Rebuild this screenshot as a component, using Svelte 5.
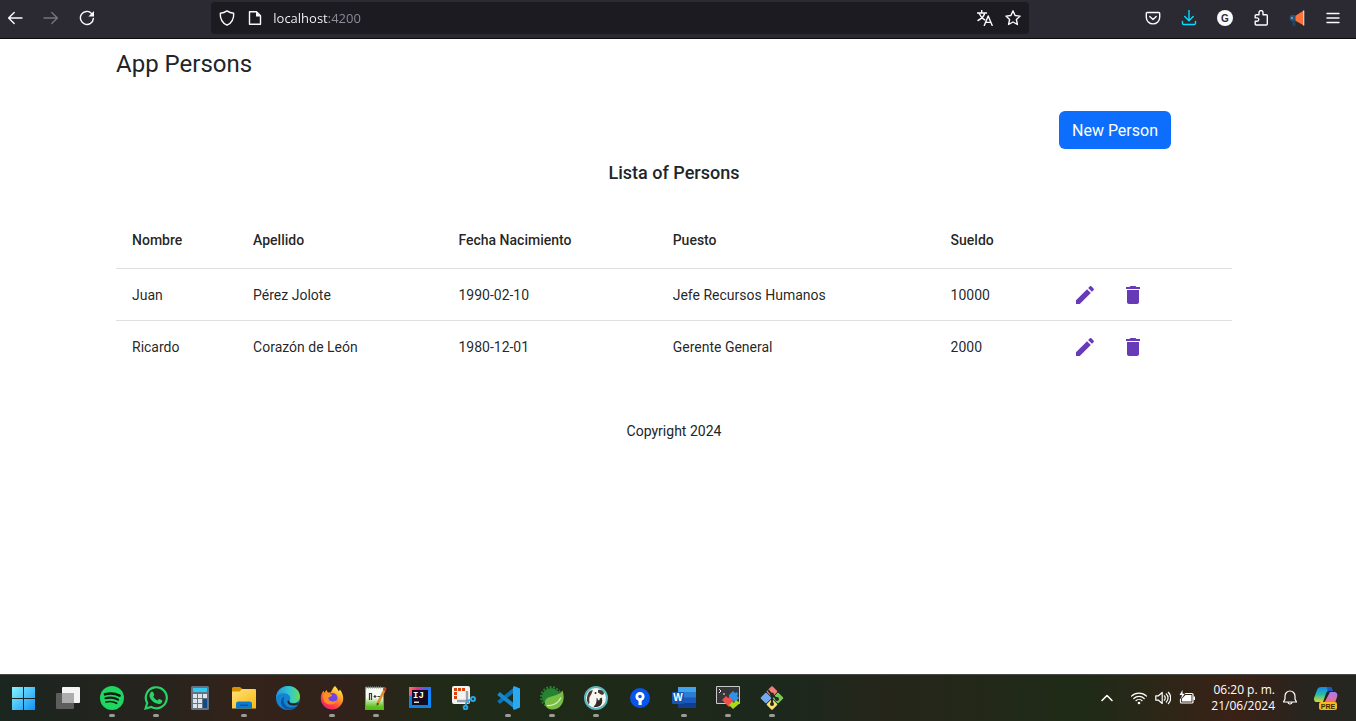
<script>
  let address = $state('localhost:4200');

  const persons = [
    { name: 'Juan', surname: 'Pérez Jolote', born: '1990-02-10', job: 'Jefe Recursos Humanos', salary: 10000 },
    { name: 'Ricardo', surname: 'Corazón de León', born: '1980-12-01', job: 'Gerente General', salary: 2000 }
  ];

  const apps = [
    { id: 'start', label: 'Start' },
    { id: 'tasks', label: 'Task view' },
    { id: 'spotify', label: 'Spotify', open: true },
    { id: 'whatsapp', label: 'WhatsApp', open: true },
    { id: 'calc', label: 'Calculator' },
    { id: 'files', label: 'File Explorer', open: true },
    { id: 'edge', label: 'Edge' },
    { id: 'firefox', label: 'Firefox', open: true },
    { id: 'notepad', label: 'Notepad++', open: true },
    { id: 'idea', label: 'IntelliJ IDEA' },
    { id: 'snip', label: 'Snipping Tool' },
    { id: 'code', label: 'Visual Studio Code', open: true },
    { id: 'spring', label: 'Spring Tools', open: true },
    { id: 'dbeaver', label: 'DBeaver', open: true },
    { id: 'sourcetree', label: 'Sourcetree' },
    { id: 'word', label: 'Word', open: true },
    { id: 'console', label: 'Console', open: true },
    { id: 'git', label: 'Git', open: true }
  ];
</script>

<div class="screen">
  <nav class="toolbar" aria-label="Browser">
    <div class="group">
      <button class="tool" aria-label="Back">
        <svg viewBox="0 0 16 16"><path d="M15 8H1.8M7.2 2.4 1.6 8l5.6 5.6" /></svg>
      </button>
      <button class="tool dim" aria-label="Forward">
        <svg viewBox="0 0 16 16"><path d="M1 8h13.2M8.8 2.4 14.4 8l-5.6 5.6" /></svg>
      </button>
      <button class="tool" aria-label="Reload">
        <svg viewBox="0 0 16 16"><path d="M14.4 8.4A6.5 6.5 0 1 1 12.6 3.4" /><path class="solid" d="M15 1v5.6H9.4z" /></svg>
      </button>
    </div>
    <div class="spacer"></div>
    <div class="urlbar">
      <svg viewBox="0 0 16 16"><path d="M8 .9c2 1.4 4.300 2.100 6.700 2.300.3 5.700-2 9.800-6.700 12C3.300 13 1 8.900 1.300 3.200 3.700 3 6 2.300 8 .9z" /></svg>
      <svg viewBox="0 0 16 16"><path d="M3.500 1.700h6l4 4v8.600H2.500V1.700z" /><path class="solid" d="M9 1.500 13.800 6.500H9z" /></svg>
      <input class="address" aria-label="Address" bind:value={address} />
      <button class="mini" aria-label="Translate">
        <svg viewBox="0 0 16 16"><path d="M0 3h9.500M4.700.5V3M7.700 3C7 6 4 9 1 10.500M2.200 3.500C3.500 6.500 5.500 8.500 7.700 9.800M7.300 15.500l3.900-9.500 4 9.500M8.700 12.400h5.200" /></svg>
      </button>
      <button class="mini" aria-label="Bookmark">
        <svg viewBox="0 0 16 16"><path d="m8 .9 2.100 4.600 5 .6-3.700 3.400 1 5L8 12l-4.400 2.500 1-5L.9 6.100l5-.6z" /></svg>
      </button>
    </div>
    <div class="spacer"></div>
    <div class="group">
      <button class="tool" aria-label="Pocket">
        <svg viewBox="0 0 16 16"><path d="M2.200 2.500h11.600c.5 0 .9.400.9.900V7.200a6.700 6.700 0 0 1-13.400 0V3.400c0-.5.400-.9.900-.9z" /><path d="m4.800 6.500 3.200 3 3.200-3" /></svg>
      </button>
      <button class="tool cyan" aria-label="Downloads">
        <svg viewBox="0 0 16 16"><path d="M8 0v10.500M3.800 6.500 8 10.700l4.200-4.200M1.500 11.500v1.700c0 .9.600 1.300 1.300 1.300h10.400c.7 0 1.300-.4 1.300-1.300v-1.700" /></svg>
      </button>
      <button class="tool" aria-label="Account">
        <svg viewBox="0 0 16 16"><circle class="solid" cx="8" cy="8" r="8" /><text x="8" y="11.500" class="gee">G</text></svg>
      </button>
      <button class="tool" aria-label="Extensions">
        <svg viewBox="0 0 16 16"><path d="M6 4.700V2.600a2 2 0 0 1 4 0v2.100h3.300c.6 0 1 .4 1 1V14c0 .6-.4 1-1 1H3.200c-.6 0-1-.4-1-1v-2.700h1.900a1.700 1.700 0 0 0 0-3.400H2.200V5.700c0-.6.400-1 1-1z" /></svg>
      </button>
      <button class="tool" aria-label="Announcements">
        <svg viewBox="0 0 16 16" class="plain"><path fill="#23425f" d="M2.500 6h4v10h-3z" /><circle cx="3.800" cy="8" r="3.300" fill="#2b5070" /><circle cx="3" cy="8" r="1.200" fill="#6f98ac" /><path fill="#ff7139" d="M6.500 5.800 14 1v14l-7.500-4.300z" /><path fill="#d8cfd0" d="M14 .5h1.300v15H14z" /></svg>
      </button>
      <button class="tool" aria-label="Menu">
        <svg viewBox="0 0 16 16"><path d="M2 3.500h12M2 8h12M2 12.500h12" /></svg>
      </button>
    </div>
  </nav>

  <main class="page">
    <div class="container">
      <h1>App Persons</h1>
      <div class="actions"><button class="primary">New Person</button></div>
      <h2>Lista of Persons</h2>
      <table>
        <colgroup>
          <col class="c1" /><col class="c2" /><col class="c3" /><col class="c4" /><col class="c5" /><col />
        </colgroup>
        <thead>
          <tr><th>Nombre</th><th>Apellido</th><th>Fecha Nacimiento</th><th>Puesto</th><th>Sueldo</th><td></td></tr>
        </thead>
        <tbody>
          {#each persons as p}
            <tr>
              <td>{p.name}</td>
              <td>{p.surname}</td>
              <td>{p.born}</td>
              <td>{p.job}</td>
              <td>{p.salary}</td>
              <td class="ops">
                <div class="pair">
                  <button class="op" aria-label="Edit {p.name}">
                    <svg viewBox="0 0 24 24"><path d="M3 17.250V21h3.750L17.810 9.940l-3.750-3.750L3 17.250zM20.710 7.040c.39-.39.39-1.020 0-1.410l-2.340-2.340c-.39-.39-1.020-.39-1.410 0l-1.830 1.830 3.750 3.750 1.830-1.830z" /></svg>
                  </button>
                  <button class="op" aria-label="Delete {p.name}">
                    <svg viewBox="0 0 24 24"><path d="M6 19c0 1.100.9 2 2 2h8c1.100 0 2-.9 2-2V7H6v12zM19 4h-3.500l-1-1h-5l-1 1H5v2h14V4z" /></svg>
                  </button>
                </div>
              </td>
            </tr>
          {/each}
        </tbody>
      </table>
      <footer>Copyright 2024</footer>
    </div>
  </main>

  <div class="taskbar">
    <div class="apps">
      {#each apps as app}
        <button class="app" class:open={app.open} aria-label={app.label}>
          <svg viewBox="0 0 24 24">
            {#if app.id === 'start'}
              <defs><linearGradient id="win" x1="0" y1="0" x2="24" y2="24" gradientUnits="userSpaceOnUse"><stop offset="0" stop-color="#8af6fd" /><stop offset="1" stop-color="#0c8ff5" /></linearGradient></defs>
              <path fill="url(#win)" d="M0 1h11v11H0zM12 1h11v11H12zM0 13h11v11H0zM12 13h11v11H12z" />
            {:else if app.id === 'tasks'}
              <rect x="6" y="1" width="18" height="16" rx="1" fill="#f4f4f4" />
              <rect x="0" y="7" width="18" height="16" rx="1" fill="#5d5d5d" />
              <path fill="#acacac" d="M6 7h12v10H6z" />
            {:else if app.id === 'spotify'}
              <circle cx="12" cy="12" r="12" fill="#1ed760" />
              <g fill="none" stroke="#101b14" stroke-linecap="round"><path stroke-width="2.600" d="M5 8.300c5-1.400 10.500-.9 14.600 1.300" /><path stroke-width="2.100" d="M5.500 12.300c4.400-1.200 9-.7 12.600 1.400" /><path stroke-width="1.700" d="M6 16c3.800-.9 7.500-.5 10.600 1.300" /></g>
            {:else if app.id === 'whatsapp'}
              <path fill="none" stroke="#25d366" stroke-width="2.200" d="M1.600 22.500 3.200 17A10.500 10.500 0 1 1 7.300 21z" />
              <path fill="#25d366" d="M7.300 5.800c.5-.5 1.500-.4 1.800.2l1.100 2.500c.2.5-.2 1.200-.9 1.900.9 1.900 2.300 3.200 4.400 4 .7-.8 1-1.600 1.600-1.400l2.700 1.300c.5.3.2 1.700-.3 2.500-1 1.300-3 1.500-5 .8-3.700-1.300-6.300-4.100-7.200-6.900-.4-2 .6-3.800 1.800-4.900z" />
            {:else if app.id === 'calc'}
              <rect x="3" y="0" width="18" height="24" rx="1.500" fill="#66727f" />
              <path fill="#31c9f5" d="M5 2h14v4H5z" />
              <path fill="#dce4ec" d="M5 8h4v4H5zM10 8h4v4h-4zM15 8h4v4h-4zM5 13h4v4H5zM10 13h4v4h-4zM5 18h4v4H5zM10 18h4v4h-4z" />
              <path fill="#114a8b" d="M15 13h4v9h-4z" />
            {:else if app.id === 'files'}
              <defs><linearGradient id="fold" x1="0" y1="0" x2="1" y2="1"><stop offset="0" stop-color="#ffe17b" /><stop offset="1" stop-color="#f9b90e" /></linearGradient></defs>
              <path fill="#d79200" d="M0 2.500Q0 1 1.500 1H8l3 2.500L8 7H0z" />
              <path fill="url(#fold)" d="M10 3h13q1 0 1 1v18.500H0V5.500h7.500z" />
              <path fill="#087bd0" d="M4 22.500V18q0-2.500 2.500-2.500h11Q20 15.500 20 18v4.500z" />
              <path fill="#04589f" d="M8 18.500h8V20H8z" />
            {:else if app.id === 'edge'}
              <defs><linearGradient id="ed" x1="0" y1="0" x2="1" y2="0"><stop offset=".1" stop-color="#259de0" /><stop offset=".6" stop-color="#35c9c9" /><stop offset="1" stop-color="#69dc55" /></linearGradient></defs>
              <circle cx="12" cy="12" r="12" fill="#1683d0" />
              <path fill="url(#ed)" d="M0 11.500C.6 5 5.500 0 12 0c7 0 12 5 12 10.500 0 4-3 6.500-6.500 6.500-2.800 0-4.800-1-4-2.500 1.800-2.500.6-6.500-5-7.200C4.500 6.900 1.200 8.500 0 11.500z" />
              <path fill="#0b58a4" d="M9 10.500c-3.500 4 0 12 7.500 11 2.500-.3 4.500-1.500 6-3.300C19.500 24.500 10 26 6 20c-2.500-4-.5-8.500 3-9.500z" />
              <path fill="#24251f" d="M13.500 14.500c-1 1.500 1 2.900 4 2.900 2 0 4-.4 5.600-1.600L22 18.500c-4 2.200-10 1-10.500-2.500-.2-1.300.7-1.700 2-1.500z" />
            {:else if app.id === 'firefox'}
              <defs><linearGradient id="ff" x1=".8" y1="0" x2=".2" y2="1"><stop offset="0" stop-color="#fff44f" /><stop offset=".4" stop-color="#ff9a25" /><stop offset=".75" stop-color="#ff394c" /><stop offset="1" stop-color="#e21b86" /></linearGradient></defs>
              <path fill="url(#ff)" d="M15 0c2 2 3 3.500 3.300 5 1-.2 1.500-1 1.600-1.600 2 2.500 3.300 5.500 3.300 9.100A11.200 11.200 0 0 1 12 23.500 11.300 11.300 0 0 1 .8 12.500c0-3 1-6 2.700-7.800l.7 2L6.500 4l1.300 2.500h3C12 4 13 1.500 15 0z" />
              <circle cx="12.500" cy="12" r="5" fill="#7542e5" />
              <path fill="#ff8f20" d="M3 8.500c4-2 7-1.200 9.200.8-1 1.700-3 1.500-4 2.700 1 4 5 4.600 9 2-2 6-11 6-13.500.5z" />
            {:else if app.id === 'notepad'}
              <defs><linearGradient id="np" x1="0" y1="0" x2="0" y2="1"><stop offset=".45" stop-color="#f7faf2" /><stop offset=".9" stop-color="#5cc01a" /></linearGradient></defs>
              <path fill="#858b82" d="M1 1h19v23H1z" /><path fill="url(#np)" d="M2 2h17v21H2z" />
              <path stroke="#8d9992" stroke-dasharray="1 1" stroke-width="2" d="M2 1.500h16" />
              <path fill="none" stroke="#353b34" stroke-width="1.200" d="M5.500 14V7.500h2V14M9.500 10.500h3M11 9v3M13.500 10.500h2.500" />
              <path stroke="#db9129" stroke-width="2.600" d="m14 17 6.500-13" /><path stroke="#b84134" stroke-width="2.800" d="m20 4.500 1.500-3" /><path fill="#4b3b2b" d="m12.800 16.500 2.400 1.200-2.500 2.300z" />
            {:else if app.id === 'idea'}
              <defs><linearGradient id="ij" x1="0" y1="0" x2="1" y2=".5"><stop offset="0" stop-color="#ff7c50" /><stop offset=".35" stop-color="#e72a9a" /><stop offset=".65" stop-color="#386af3" /><stop offset="1" stop-color="#088cff" /></linearGradient></defs>
              <path fill="url(#ij)" d="M1 1h22v21H1z" /><path fill="#0a84e8" d="M1 10h4v9h18v3H1z" /><path fill="#160b1c" d="M4 4h16v15H4z" />
              <text x="5" y="12" class="ij">IJ</text><path fill="#ddd" d="M6 15.500h5V17H6z" />
            {:else if app.id === 'snip'}
              <rect width="18" height="18" rx="2" fill="#f2f3f4" />
              <path fill="#d8430c" d="M2 2h3v3H2zM6 2h3v3H6zM10 2h3v3h-3zM2 6h3v3H2zM2 10h3v3H2z" />
              <path fill="none" stroke="#9ba3aa" stroke-width="2.400" d="M15 5v10H5" /><path stroke="#818a92" stroke-width="2" d="m14 14 3 3" />
              <path stroke="#2597d8" stroke-width="1.800" d="m13.500 20 1-4M16 14.500l4-1" /><circle cx="21" cy="13" r="2" fill="none" stroke="#2aa6e5" stroke-width="2" /><circle cx="13.500" cy="21.500" r="1.800" fill="none" stroke="#2aa6e5" stroke-width="2" />
            {:else if app.id === 'code'}
              <path fill="none" stroke="#0874b9" stroke-width="4" stroke-linejoin="round" d="M18 4 2.500 16.500" />
              <path fill="none" stroke="#1689cf" stroke-width="4" stroke-linejoin="round" d="M2.500 7.500 18 20" />
              <path fill="#29a9f2" d="m18 0 6 2.500v19L18 24l-1-1.500v-21z" />
            {:else if app.id === 'spring'}
              <circle cx="11" cy="11" r="9" fill="#268332" /><circle cx="11" cy="11" r="10" fill="none" stroke="#268332" stroke-width="2" stroke-dasharray="2 1.490" />
              <path fill="#78bd43" d="M22.500 4.500c3.500 9.500-1 19-10 19-4.500 0-7.500-2.500-7.500-6.500 0-9 12-4.500 17.500-12.500z" /><path fill="none" stroke="#e2f0cb" stroke-width="1.200" d="M7 19.500c6.500.5 11.500-3 14-8" />
            {:else if app.id === 'dbeaver'}
              <circle cx="12" cy="12" r="11" fill="#f6f6f3" stroke="#58b8bf" stroke-width="2" />
              <path fill="#4a3a32" d="M3 15C2.500 8 5.500 3.500 9 4.200 7.500 6 8 8 6.500 9.500c-1.500 2-1.500 4-1 7.500l-1 1z" />
              <path fill="#4a3a32" d="M14 4c2.500-.8 5 .3 5.800 2.500.5 1.800-.7 2.500-2.300 2.300-1.500-.5-2-1.800-3.500-2z" />
              <circle cx="11.500" cy="7" r="1" fill="#2b211c" />
              <path fill="#342923" d="M12.500 12c1.500 1.200 3 1 5-.5 1.200 2 1.200 6-1.200 8-1.800 1.500-4.800 2-6.800 1 2.500-1.500 3.500-5 3-8.500z" />
              <path fill="#fff" d="M13.800 11.500h1.800v2.700h-1.800z" />
            {:else if app.id === 'sourcetree'}
              <circle cx="12" cy="12" r="10" fill="#0755e9" /><circle cx="12" cy="10.500" r="3.200" fill="none" stroke="#fff" stroke-width="2.800" /><path fill="#fff" d="M10.500 13.500h3.200V19h-3.200z" />
            {:else if app.id === 'word'}
              <path fill="#41a5ee" d="M6 1h18v6H6z" /><path fill="#2b7cd3" d="M6 6h18v6H6z" /><path fill="#185abd" d="M6 11.500h18v6H6z" /><path fill="#103f91" d="M6 17h18v5H6z" /><rect y="6" width="12" height="12" rx="1" fill="#1856b3" /><text x="6" y="15.200" class="word">W</text>
            {:else if app.id === 'console'}
              <path fill="#373737" stroke="#c9c9c9" d="M.5.500h23v17H.5z" /><path fill="none" stroke="#eee" d="m3 3 2 2-2 2M7 8h2" />
              <path fill="#2f91e8" d="m13 9 4-4 2 2 2-1 1 2-1 2 2 2-4 4-6-4z" /><path fill="#f3504d" d="m6 14 4-4 2 2 3-1 1 3 2 2-5 5z" /><path fill="#a9df12" d="m13 19 3-3 2 1 2-3 4 3-7 6z" />
            {:else}
              <rect x="8" y="1.500" width="8" height="8" rx="1" transform="rotate(45 12 5.500)" fill="#f47c7a" /><rect x="2" y="8" width="8" height="8" rx="1" transform="rotate(45 6 12)" fill="#75a9ef" /><rect x="14" y="8" width="8" height="8" rx="1" transform="rotate(45 18 12)" fill="#78ca57" /><rect x="8" y="14.500" width="8" height="8" rx="1" transform="rotate(45 12 18.500)" fill="#fbdf72" />
              <path fill="none" stroke="#222b22" stroke-width="2" d="m8 4 4 5v10M12 9l5 4" /><circle cx="12" cy="8.500" r="2" fill="#222b22" /><circle cx="17" cy="13" r="2" fill="#222b22" /><circle cx="12" cy="18" r="2" fill="#222b22" />
            {/if}
          </svg>
        </button>
      {/each}
    </div>
    <div class="tray">
      <button class="sys" aria-label="Show hidden icons"><svg viewBox="0 0 16 16"><path stroke-width="1.600" d="M3 10.500 8 5.500l5 5" /></svg></button>
      <button class="sys status" aria-label="Network, volume and battery">
        <svg viewBox="0 0 16 16"><path d="M.5 6.200a10.600 10.600 0 0 1 15 0M2.800 8.500a7.400 7.400 0 0 1 10.400 0M5 10.700a4.300 4.300 0 0 1 6 0" /><circle class="solid" cx="8" cy="13" r="1.300" /></svg>
        <svg viewBox="0 0 16 16"><path d="M.8 5.800h2.700l3.700-3.300v11L3.500 10.200H.8zM9.300 5.800a3 3 0 0 1 0 4.400M11.300 4a5.500 5.500 0 0 1 0 8M13.300 2.300a8 8 0 0 1 0 11.400" /></svg>
        <svg viewBox="0 0 16 16"><path d="M6.500 3.500H13c.6 0 1 .4 1 1v7.500c0 .6-.4 1-1 1H2.500c-.6 0-1-.4-1-1V9" /><path class="solid" d="M6.500 5H12.500v6.500H3V8.500zM14.500 6.500H16v3.500h-1.500zM3.500 0 .5 5H3L2 9l3.800-5.300H3.500z" /></svg>
      </button>
      <button class="clock"><span>06:20 p. m.</span><span>21/06/2024</span></button>
      <button class="sys" aria-label="Notifications"><svg viewBox="0 0 16 16"><path d="M1.500 12h13L13 9V6A5 5 0 0 0 3 6v3zM6 12.500c.3 2 3.700 2 4 0" /></svg></button>
      <button class="copilot" aria-label="Copilot preview">
        <svg viewBox="0 0 24 24">
          <defs><linearGradient id="cpa" x1="0" y1="0" x2="0" y2="1"><stop offset="0" stop-color="#1685ec" /><stop offset=".5" stop-color="#25bda8" /><stop offset="1" stop-color="#e3d52a" /></linearGradient><linearGradient id="cpb" x1="0" y1="0" x2="0" y2="1"><stop offset="0" stop-color="#a77bf5" /><stop offset="1" stop-color="#fa6b79" /></linearGradient></defs>
          <path fill="url(#cpa)" d="M7 1h9c1.500 0 2 1 2.500 4h-4c-1 0-2 .8-2.500 2.500L9 16H3c-2.500 0-3.500-2-2.800-4.500l3-8C4 2 5 1 7 1z" /><path fill="#155bc4" d="M13 1h3c1.500 0 2 1 2.500 4h-5z" />
          <path fill="url(#cpb)" d="M16 6h4c2.500 0 4 2 3.200 4.500L21 17H9l2-1.500z" />
          <rect x="5" y="16" width="18" height="8" rx="2" fill="#fdb913" /><text x="14" y="22.500" class="pre">PRE</text>
        </svg>
      </button>
    </div>
  </div>
</div>

<style>
  :global(body) { margin: 0; background: #fff; }
  .screen { display: flex; flex-direction: column; min-height: 100vh; font-family: Roboto, sans-serif; color: #212529; }
  button { border: 0; background: none; padding: 0; font: inherit; color: inherit; cursor: pointer; }
  svg { display: block; flex: none; }

  .toolbar { display: flex; align-items: center; box-sizing: border-box; height: 39px; padding: 0 8px 3px 0; background: #2b2a33; border-bottom: 1px solid #0c0c0d; color: #fbfbfe; }
  .toolbar svg, .sys svg { width: 16px; height: 16px; fill: none; stroke: currentColor; stroke-width: 1.4; stroke-linecap: round; stroke-linejoin: round; }
  .toolbar .plain { stroke: none; }
  .toolbar .solid, .sys .solid { fill: currentColor; stroke: none; }
  .group { display: flex; gap: 6px; }
  .tool { display: flex; align-items: center; justify-content: center; width: 30px; height: 32px; }
  .dim { color: #75747c; }
  .cyan { color: #00ddff; }
  .gee { font: bold 10px "Liberation Sans", sans-serif; text-anchor: middle; fill: #2b2a33; stroke: none; }
  .spacer { flex: 3; }
  .urlbar { flex: 22; display: flex; align-items: center; gap: 12px; box-sizing: border-box; height: 32px; padding: 0 8px; border-radius: 4px; background: #1c1b22; }
  .address { flex: 1; min-width: 0; border: 0; padding: 0; outline: 0; height: 24px; margin-left: -2px; font: 13px "Open Sans", "Noto Sans", sans-serif; background: linear-gradient(90deg, #fbfbfe 56px, #8f8f9d 56px); -webkit-background-clip: text; background-clip: text; color: transparent; }

  .page { flex: 1; padding-right: 8px; }
  .container { box-sizing: border-box; max-width: 1140px; margin: 0 auto; padding: 9px 12px 0; }
  h1 { margin: 0; font-size: 24px; line-height: 32px; font-weight: 400; }
  .actions { display: flex; justify-content: flex-end; padding: 31px 61px 8px 0; }
  .primary { height: 38px; padding: 1px 13px 0; border-radius: 6px; background: #0d6efd; color: #fff; font-size: 16px; line-height: 24px; }
  h2 { margin: 0; font-size: 18px; line-height: 32px; font-weight: 500; text-align: center; }
  table { width: 100%; margin-top: 23px; table-layout: fixed; border-collapse: separate; border-spacing: 0; font-size: 14px; line-height: 20px; color: rgba(0, 0, 0, 0.87); }
  .c1 { width: 10.85%; }
  .c2 { width: 18.4%; }
  .c3 { width: 19.2%; }
  .c4 { width: 24.9%; }
  .c5 { width: 11.3%; }
  th, td { padding: 0 16px; text-align: left; white-space: nowrap; }
  thead th, thead td { height: 56px; font-weight: 500; border-bottom: 1px solid #e0e0e0; }
  tbody td { height: 51px; }
  tbody tr:not(:last-child) td { border-bottom: 1px solid #e0e0e0; }
  td.ops { padding: 0; }
  .pair { display: flex; }
  .op { display: flex; align-items: center; justify-content: center; width: 48px; height: 48px; }
  .op svg { width: 24px; height: 24px; fill: #673ab7; }
  footer { padding: 49px 0; text-align: center; font-size: 14px; line-height: 20px; }

  .taskbar { display: flex; align-items: center; justify-content: space-between; box-sizing: border-box; height: 47px; padding: 0 18px 0 2px; border-top: 1px solid #484b45; color: #fff; background: linear-gradient(90deg, #1b261f 0%, #26231e 11%, #33231a 18%, #30221a 26%, #202a17 32%, #1f2917 45%, #1c281d 58%, #25251a 65%, #1f2b17 80%, #2b2717 85%, #3a2116 91%, #29241e 96%, #252620 100%); }
  .apps, .tray { display: flex; align-items: center; height: 46px; }
  .app { position: relative; display: flex; align-items: center; justify-content: center; width: 44px; height: 46px; }
  .app svg, .copilot svg { width: 24px; height: 24px; }
  .app.open::after { content: ""; position: absolute; bottom: 4px; left: 19px; width: 6px; height: 3px; border-radius: 2px; background: #9b9c98; }
  .ij { font: bold 9px "Liberation Mono", monospace; fill: #fff; }
  .word { font: bold 10px "Liberation Sans", sans-serif; text-anchor: middle; fill: #fff; }
  .pre { font: bold 7px "Liberation Sans", sans-serif; text-anchor: middle; fill: #3b2b08; }
  .status { display: flex; gap: 8px; margin: 0 16px; }
  .sys svg { stroke-width: 1.2; }
  .clock { display: flex; flex-direction: column; align-items: flex-end; margin-right: 7px; font: 12px/16px "Open Sans", "Noto Sans", sans-serif; }
  .copilot { margin-left: 16px; }
</style>
